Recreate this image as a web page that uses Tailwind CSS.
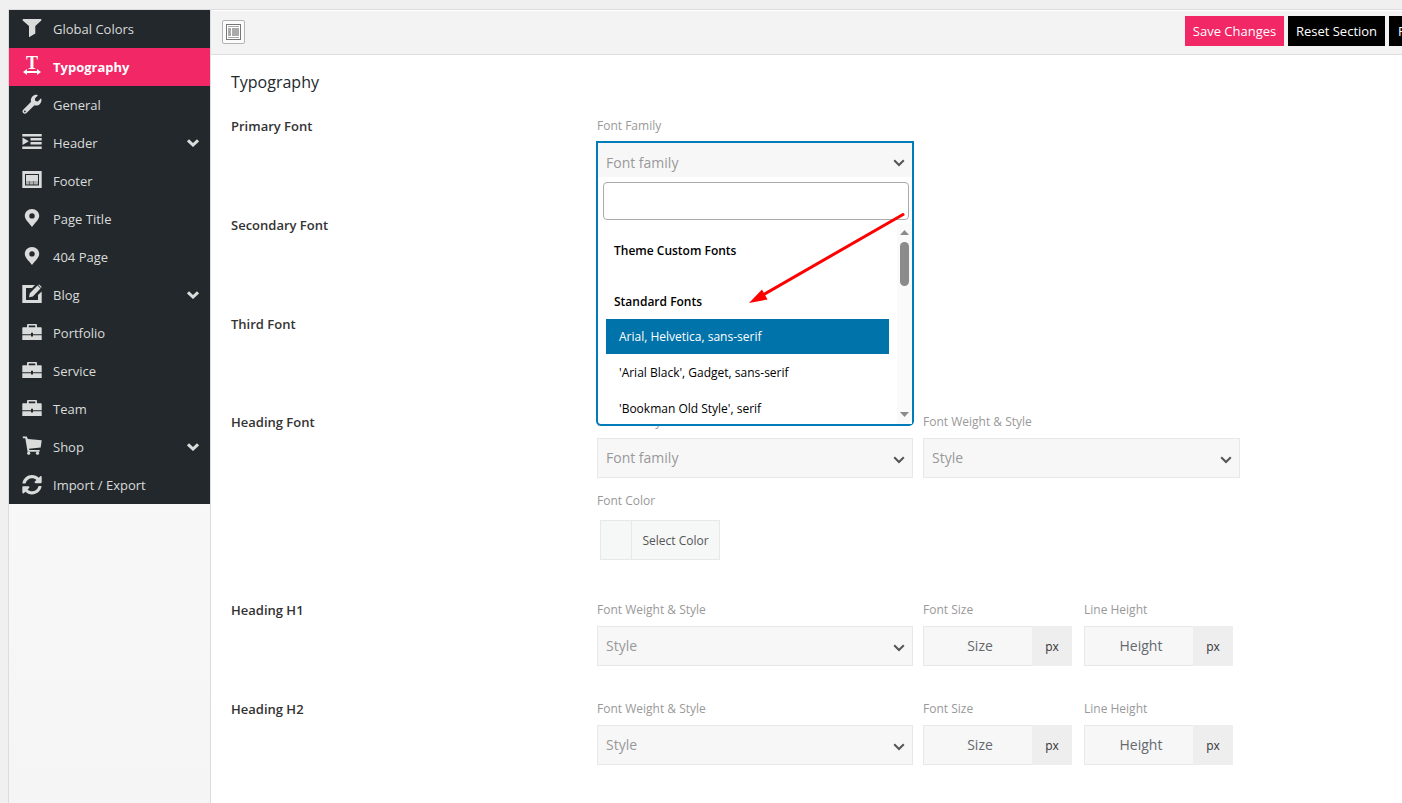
<!DOCTYPE html>
<html lang="en">
<head>
    <meta charset="UTF-8">
    <meta name="viewport" content="width=device-width, initial-scale=1.0">
    <title>Theme Options - Typography</title>
    <script src="https://cdn.jsdelivr.net/npm/@tailwindcss/browser@4"></script>
</head>
<body class="min-h-screen overflow-x-hidden bg-[#f0f0f0] font-['Segoe_UI','Open_Sans',sans-serif] text-[13px] text-[#333]">

    <!-- Icon sprite -->
    <svg class="hidden" aria-hidden="true">
        <symbol id="i-filter" viewBox="0 0 20 22"><path d="M.7 1h18.6v1.600L13.300 8v7.400L7 19.300V8L.7 2.600z"/></symbol>
        <symbol id="i-type" viewBox="0 0 20 22">
            <text x="10" y="13" text-anchor="middle" font-family="Liberation Serif, serif" font-weight="700" font-size="18">T</text>
            <path d="M1 16l4-3v2h10v-2l4 3-4 3v-2H5v2z"/>
        </symbol>
        <symbol id="i-wrench" viewBox="-14 -22 540 594"><path d="M507.730 109.100c-2.240-9.030-13.540-12.090-20.120-5.510l-74.360 74.360-67.880-11.310-11.310-67.880 74.360-74.360c6.620-6.620 3.430-17.900-5.660-20.160-47.380-11.740-99.550.910-136.580 37.930-39.640 39.640-50.550 97.100-34.050 147.200L18.740 402.760c-24.990 24.990-24.990 65.510 0 90.500 24.990 24.990 65.510 24.990 90.500 0l213.210-213.210c50.120 16.710 107.470 5.680 147.370-34.220 37.070-37.070 49.700-89.320 37.910-136.730zM64 472c-13.250 0-24-10.750-24-24 0-13.260 10.750-24 24-24s24 10.740 24 24c0 13.250-10.750 24-24 24z"/></symbol>
        <symbol id="i-indent" viewBox="0 0 20 22"><path d="M.3 2h19.400v2.500H.3zM8.500 6h11.200v2.500H8.500zM8.500 10h11.200v2.500H8.500zM.3 14.400h19.400v2.600H.3zM.5 5.600l6.300 3.700-6.300 3.800z"/></symbol>
        <symbol id="i-footer" viewBox="0 0 20 22">
            <path fill-rule="evenodd" d="M.3 1h19.400v17H.3zM3 4v11.500h14V4z"/>
            <path d="M4 5h12v6H4z"/>
            <path opacity=".75" d="M4 11h3.500v3.500H4zM8 11h3.500v3.500H8zM12 11h4v3.500h-4z"/>
        </symbol>
        <symbol id="i-pin" viewBox="0 0 20 22"><path fill-rule="evenodd" d="M10 1c-4 0-7.200 3-7.200 6.800 0 4 4.200 7 7.200 11.200 3-4.200 7.200-7.200 7.200-11.200C17.200 4 14 1 10 1zm0 4.200a2.700 2.700 0 110 5.400 2.700 2.700 0 010-5.400z"/></symbol>
        <symbol id="i-edit" viewBox="0 0 20 22">
            <path d="M.3 1H13l-3 3H4v12h12v-5l3.700-3.500V19H.3z"/>
            <path d="M7 13.300l.8-4L15.500 1.600l3 3-7.700 7.800zM16.200 1.100l1-.6 2.500 2.400-.7 1z"/>
        </symbol>
        <symbol id="i-briefcase" viewBox="0 0 20 22"><path fill-rule="evenodd" d="M5 5.300V3.200C5 2.500 5.500 2 6.200 2h7.600c.7 0 1.200.5 1.200 1.200v2.100h3.700c.6 0 1 .4 1 1v6h-8.700v-1.500H9v1.500H.3v-6c0-.6.4-1 1-1zm1.700 0h6.600V3.500H6.700zM.3 13.300H9v1.200h2v-1.200h8.700V18H.3z"/></symbol>
        <symbol id="i-cart" viewBox="0 0 20 22">
            <path d="M.8.500h3.900l1.200 2.500 13.800 1.200-1 7.300-11.700 1.300.3 1.300h10.300v1.600H5.600L3.300 2.300H.8z"/>
            <circle cx="6.700" cy="17.200" r="1.600"/><circle cx="15.500" cy="17.200" r="1.600"/>
        </symbol>
        <symbol id="i-sync" viewBox="0 -20 512 563"><path d="M370.720 133.280C339.458 104.008 298.888 87.962 255.848 88c-77.458.068-144.328 53.178-162.791 126.850-1.344 5.363-6.122 9.150-11.651 9.150H24.103c-7.498 0-13.194-6.807-11.807-14.176C33.933 94.924 134.813 8 256 8c66.448 0 126.791 26.136 171.315 68.685L463.030 40.970C478.149 25.851 504 36.559 504 57.941V192c0 13.255-10.745 24-24 24H345.941c-21.382 0-32.090-25.851-16.971-40.971l41.750-41.749zM32 296h134.059c21.382 0 32.090 25.851 16.971 40.971l-41.750 41.750c31.262 29.273 71.835 45.319 114.876 45.280 77.418-.070 144.315-53.144 162.787-126.849 1.344-5.363 6.122-9.150 11.651-9.150h57.304c7.498 0 13.194 6.807 11.807 14.176C478.067 417.076 377.187 504 256 504c-66.448 0-126.791-26.136-171.315-68.685L48.970 471.030C33.851 486.149 8 475.441 8 454.059V320c0-13.255 10.745-24 24-24z"/></symbol>
        <symbol id="i-down" viewBox="0 0 12 8"><path d="M1.200 1.200L6 6l4.800-4.800" fill="none" stroke="currentColor" stroke-width="2"/></symbol>
        <symbol id="i-down-bold" viewBox="0 0 12 8"><path d="M1 1.300l5 4.700 5-4.700" fill="none" stroke="currentColor" stroke-width="3"/></symbol>
    </svg>

    <div class="flex min-h-screen pt-[9px] pl-2">
        <div class="flex flex-1 border-t border-l border-[#dcdcde]">

            <!-- Section menu -->
            <aside class="w-[201px] shrink-0 bg-linear-to-b from-[#fcfcfc] to-[#f5f5f5]">
                <nav class="flex flex-col bg-[#23282c] text-[#d9dcdb]">
                    <a href="#" class="flex h-[38px] items-center gap-[11px] px-[13px] pt-[2px]"><svg class="mb-[2px] h-[22px] w-5 fill-current"><use href="#i-filter"/></svg>Global Colors</a>
                    <a href="#" class="flex h-[38px] items-center gap-[11px] bg-[#f12766] px-[13px] pt-[2px] font-bold text-white"><svg class="mb-[2px] h-[22px] w-5 fill-current"><use href="#i-type"/></svg>Typography</a>
                    <a href="#" class="flex h-[38px] items-center gap-[11px] px-[13px] pt-[2px]"><svg class="mb-[2px] h-[22px] w-5 fill-current"><use href="#i-wrench"/></svg>General</a>
                    <a href="#" class="flex h-[38px] items-center gap-[11px] pt-[2px] pr-[11px] pl-[13px]"><svg class="mb-[2px] h-[22px] w-5 fill-current"><use href="#i-indent"/></svg>Header<svg class="mb-[2px] ml-auto h-2 w-3"><use href="#i-down-bold"/></svg></a>
                    <a href="#" class="flex h-[38px] items-center gap-[11px] px-[13px] pt-[2px]"><svg class="mb-[2px] h-[22px] w-5 fill-current"><use href="#i-footer"/></svg>Footer</a>
                    <a href="#" class="flex h-[38px] items-center gap-[11px] px-[13px] pt-[2px]"><svg class="mb-[2px] h-[22px] w-5 fill-current"><use href="#i-pin"/></svg>Page Title</a>
                    <a href="#" class="flex h-[38px] items-center gap-[11px] px-[13px] pt-[2px]"><svg class="mb-[2px] h-[22px] w-5 fill-current"><use href="#i-pin"/></svg>404 Page</a>
                    <a href="#" class="flex h-[38px] items-center gap-[11px] pt-[2px] pr-[11px] pl-[13px]"><svg class="mb-[2px] h-[22px] w-5 fill-current"><use href="#i-edit"/></svg>Blog<svg class="mb-[2px] ml-auto h-2 w-3"><use href="#i-down-bold"/></svg></a>
                    <a href="#" class="flex h-[38px] items-center gap-[11px] px-[13px] pt-[2px]"><svg class="mb-[2px] h-[22px] w-5 fill-current"><use href="#i-briefcase"/></svg>Portfolio</a>
                    <a href="#" class="flex h-[38px] items-center gap-[11px] px-[13px] pt-[2px]"><svg class="mb-[2px] h-[22px] w-5 fill-current"><use href="#i-briefcase"/></svg>Service</a>
                    <a href="#" class="flex h-[38px] items-center gap-[11px] px-[13px] pt-[2px]"><svg class="mb-[2px] h-[22px] w-5 fill-current"><use href="#i-briefcase"/></svg>Team</a>
                    <a href="#" class="flex h-[38px] items-center gap-[11px] pt-[2px] pr-[11px] pl-[13px]"><svg class="mb-[2px] h-[22px] w-5 fill-current"><use href="#i-cart"/></svg>Shop<svg class="mb-[2px] ml-auto h-2 w-3"><use href="#i-down-bold"/></svg></a>
                    <a href="#" class="flex h-[38px] items-center gap-[11px] px-[13px] pt-[2px]"><svg class="mb-[2px] h-[22px] w-5 fill-current"><use href="#i-sync"/></svg>Import / Export</a>
                </nav>
            </aside>

            <main class="min-w-0 flex-1 border-l border-[#dcdcde] bg-white">
                <!-- Toolbar -->
                <div class="-mr-16 flex h-[45px] items-center border-t border-b border-t-white border-b-[#dedede] bg-[#f3f3f3] pl-[11px]">
                    <button type="button" aria-label="Expand options" class="mb-[2px] flex h-6 w-[23px] items-center justify-center rounded-xs border border-[#b4b4b4] bg-[#fbfbfb]">
                        <svg class="h-4 w-[15px]" viewBox="0 0 15 16">
                            <rect x=".5" y=".5" width="14" height="15" fill="#fff" stroke="#777"/>
                            <path fill="#aaa" d="M2 2h11v1H2zM2 4h3v8H2zM6 4h7v8H6zM2 13h11v1H2z"/>
                        </svg>
                    </button>
                    <div class="ml-auto flex gap-1 pb-1 text-white">
                        <button type="button" class="h-[30px] w-[99px] bg-[#f12766] pt-[3px]">Save Changes</button>
                        <button type="button" class="h-[30px] w-[97px] bg-black pt-[3px]">Reset Section</button>
                        <button type="button" class="h-[30px] w-[77px] bg-black px-[9px] pt-[3px] text-left">Reset All</button>
                    </div>
                </div>

                <div class="pt-[15px] pl-5">
                    <h2 class="h-[46px] text-base leading-6 font-medium text-[#23282d]">Typography</h2>

                    <section class="flex pb-[33px]">
                        <h3 class="w-[366px] shrink-0 text-[13px] leading-5 font-semibold">Primary Font</h3>
                        <div class="w-[316px]">
                            <label for="primary-search" class="block text-xs leading-5 text-[#999]">Font Family</label>
                            <div class="relative mt-[6px] h-10">
                                <!-- Open font picker -->
                                <div class="absolute -inset-x-px -top-px z-10 rounded-b-[5px] border-2 border-[#007cba] bg-white">
                                    <button type="button" class="flex h-[34px] w-full items-center justify-between bg-[#f7f7f7] pt-[5px] pr-[7px] pl-2 text-sm text-[#999]">Font family<svg class="h-2 w-3 text-[#555]"><use href="#i-down"/></svg></button>
                                    <div class="pt-[5px] pr-[3px] pl-[5px]">
                                        <input id="primary-search" type="text" class="block h-[38px] w-full rounded border border-[#aaa] bg-white px-2 text-sm">
                                    </div>
                                    <div class="mt-1 flex h-[200px] overflow-hidden text-xs text-black">
                                        <div class="flex-1 px-2">
                                            <div class="px-2 pt-[17px] leading-5 font-semibold">Theme Custom Fonts</div>
                                            <div class="px-2 pt-[31px] pb-[7px] leading-5 font-semibold">Standard Fonts</div>
                                            <ul role="listbox" class="flex flex-col gap-px">
                                                <li role="option" aria-selected="true" class="bg-[#0073aa] px-[13px] leading-[35px] text-white">Arial, Helvetica, sans-serif</li>
                                                <li role="option" class="px-[13px] leading-[35px]">'Arial Black', Gadget, sans-serif</li>
                                                <li role="option" class="px-[13px] leading-[35px]">'Bookman Old Style', serif</li>
                                            </ul>
                                        </div>
                                        <!-- Scrollbar -->
                                        <div class="flex w-[15px] flex-col items-center bg-[#fafafa] pt-[6px] pb-[7px]">
                                            <svg class="h-[5px] w-[9px] fill-[#8b8b8b]" viewBox="0 0 9 5"><path d="M0 5L4.500 0 9 5z"/></svg>
                                            <div class="mt-[7px] h-11 w-[9px] rounded-full bg-[#8b8b8b]"></div>
                                            <svg class="mt-auto h-[5px] w-[9px] fill-[#8b8b8b]" viewBox="0 0 9 5"><path d="M0 0h9L4.500 5z"/></svg>
                                        </div>
                                    </div>
                                </div>
                                <!-- Pointer arrow -->
                                <svg class="pointer-events-none absolute top-[70px] left-[150px] z-20 h-[94px] w-[160px]" viewBox="0 0 160 94">
                                    <path d="M156 2.500L14 84" stroke="#fe0000" stroke-width="3" stroke-linecap="round"/>
                                    <path d="M2 91l13-13.500 5.500 10z" fill="#fe0000"/>
                                </svg>
                            </div>
                        </div>
                    </section>

                    <section class="flex pb-[33px]">
                        <h3 class="w-[366px] shrink-0 text-[13px] leading-5 font-semibold">Secondary Font</h3>
                        <div class="h-[66px] w-[316px]"></div>
                    </section>

                    <section class="flex pb-8">
                        <h3 class="w-[366px] shrink-0 text-[13px] leading-5 font-semibold">Third Font</h3>
                        <div class="h-[66px] w-[316px]"></div>
                    </section>

                    <section class="flex pb-10">
                        <h3 class="w-[366px] shrink-0 text-[13px] leading-5 font-semibold">Heading Font</h3>
                        <div>
                            <div class="flex gap-[10px]">
                                <div class="w-[316px]">
                                    <label for="heading-family" class="block text-xs leading-5 text-[#999]">Font Family</label>
                                    <div class="relative mt-[6px]">
                                        <select id="heading-family" class="h-10 w-full appearance-none border border-[#e8e8e8] bg-[#f7f7f7] px-2 text-sm text-[#999]"><option>Font family</option></select>
                                        <svg class="pointer-events-none absolute top-[18px] right-2 h-2 w-3 text-[#555]"><use href="#i-down"/></svg>
                                    </div>
                                </div>
                                <div class="w-[317px]">
                                    <label for="heading-style" class="block text-xs leading-5 text-[#999]">Font Weight &amp; Style</label>
                                    <div class="relative mt-[6px]">
                                        <select id="heading-style" class="h-10 w-full appearance-none border border-[#e8e8e8] bg-[#f7f7f7] px-2 text-sm text-[#999]"><option>Style</option></select>
                                        <svg class="pointer-events-none absolute top-[18px] right-2 h-2 w-3 text-[#555]"><use href="#i-down"/></svg>
                                    </div>
                                </div>
                            </div>
                            <div class="mt-[13px] text-xs leading-5 text-[#999]">Font Color</div>
                            <button type="button" class="mt-[9px] ml-[3px] flex h-10 w-[120px] border border-[#e8e8e8] bg-[#f6f7f7] text-xs text-[#555]">
                                <span class="w-[31px] self-stretch border-r border-[#e8e8e8]"></span>
                                <span class="flex-1 self-center pt-[2px]">Select Color</span>
                            </button>
                        </div>
                    </section>

                    <section class="flex pb-[33px]">
                        <h3 class="w-[366px] shrink-0 text-[13px] leading-5 font-semibold">Heading H1</h3>
                        <div class="flex">
                            <div class="mr-[10px] w-[316px]">
                                <label for="h1-style" class="block text-xs leading-5 text-[#999]">Font Weight &amp; Style</label>
                                <div class="relative mt-[6px]">
                                    <select id="h1-style" class="h-10 w-full appearance-none border border-[#e8e8e8] bg-[#f7f7f7] px-2 text-sm text-[#999]"><option>Style</option></select>
                                    <svg class="pointer-events-none absolute top-[18px] right-2 h-2 w-3 text-[#555]"><use href="#i-down"/></svg>
                                </div>
                            </div>
                            <div class="mr-3 w-[149px]">
                                <label for="h1-size" class="block text-xs leading-5 text-[#999]">Font Size</label>
                                <div class="mt-[6px] flex">
                                    <input id="h1-size" type="text" placeholder="Size" class="h-10 w-[109px] border border-r-0 border-[#e8e8e8] bg-[#f7f7f7] pb-[2px] pl-1 text-center text-sm placeholder:text-[#646970]">
                                    <span class="flex-1 bg-[#eee] pt-px text-center text-xs leading-[39px]">px</span>
                                </div>
                            </div>
                            <div class="w-[149px]">
                                <label for="h1-height" class="block text-xs leading-5 text-[#999]">Line Height</label>
                                <div class="mt-[6px] flex">
                                    <input id="h1-height" type="text" placeholder="Height" class="h-10 w-[109px] border border-r-0 border-[#e8e8e8] bg-[#f7f7f7] pb-[2px] pl-1 text-center text-sm placeholder:text-[#646970]">
                                    <span class="flex-1 bg-[#eee] pt-px text-center text-xs leading-[39px]">px</span>
                                </div>
                            </div>
                        </div>
                    </section>

                    <section class="flex pb-[33px]">
                        <h3 class="w-[366px] shrink-0 text-[13px] leading-5 font-semibold">Heading H2</h3>
                        <div class="flex">
                            <div class="mr-[10px] w-[316px]">
                                <label for="h2-style" class="block text-xs leading-5 text-[#999]">Font Weight &amp; Style</label>
                                <div class="relative mt-[6px]">
                                    <select id="h2-style" class="h-10 w-full appearance-none border border-[#e8e8e8] bg-[#f7f7f7] px-2 text-sm text-[#999]"><option>Style</option></select>
                                    <svg class="pointer-events-none absolute top-[18px] right-2 h-2 w-3 text-[#555]"><use href="#i-down"/></svg>
                                </div>
                            </div>
                            <div class="mr-3 w-[149px]">
                                <label for="h2-size" class="block text-xs leading-5 text-[#999]">Font Size</label>
                                <div class="mt-[6px] flex">
                                    <input id="h2-size" type="text" placeholder="Size" class="h-10 w-[109px] border border-r-0 border-[#e8e8e8] bg-[#f7f7f7] pb-[2px] pl-1 text-center text-sm placeholder:text-[#646970]">
                                    <span class="flex-1 bg-[#eee] pt-px text-center text-xs leading-[39px]">px</span>
                                </div>
                            </div>
                            <div class="w-[149px]">
                                <label for="h2-height" class="block text-xs leading-5 text-[#999]">Line Height</label>
                                <div class="mt-[6px] flex">
                                    <input id="h2-height" type="text" placeholder="Height" class="h-10 w-[109px] border border-r-0 border-[#e8e8e8] bg-[#f7f7f7] pb-[2px] pl-1 text-center text-sm placeholder:text-[#646970]">
                                    <span class="flex-1 bg-[#eee] pt-px text-center text-xs leading-[39px]">px</span>
                                </div>
                            </div>
                        </div>
                    </section>
                </div>
            </main>
        </div>
    </div>
</body>
</html>
